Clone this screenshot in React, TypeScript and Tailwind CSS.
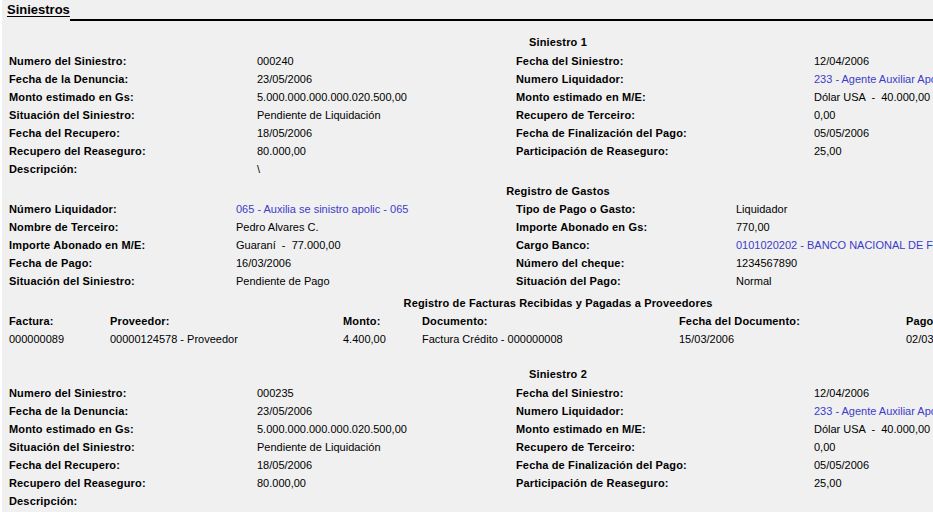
import React from 'react'

type Field = { label: string; value: string; link?: boolean }

const siniestros: { title: string; left: Field[]; right: Field[] }[] = [
  {
    title: 'Siniestro 1',
    left: [
      { label: 'Numero del Siniestro:', value: '000240' },
      { label: 'Fecha de la Denuncia:', value: '23/05/2006' },
      { label: 'Monto estimado en Gs:', value: '5.000.000.000.000.020.500,00' },
      { label: 'Situación del Siniestro:', value: 'Pendiente de Liquidación' },
      { label: 'Fecha del Recupero:', value: '18/05/2006' },
      { label: 'Recupero del Reaseguro:', value: '80.000,00' },
      { label: 'Descripción:', value: '\\' },
    ],
    right: [
      { label: 'Fecha del Siniestro:', value: '12/04/2006' },
      { label: 'Numero Liquidador:', value: '233 - Agente Auxiliar Apoderado', link: true },
      { label: 'Monto estimado en M/E:', value: 'Dólar USA  -  40.000,00' },
      { label: 'Recupero de Terceiro:', value: '0,00' },
      { label: 'Fecha de Finalización del Pago:', value: '05/05/2006' },
      { label: 'Participación de Reaseguro:', value: '25,00' },
    ],
  },
  {
    title: 'Siniestro 2',
    left: [
      { label: 'Numero del Siniestro:', value: '000235' },
      { label: 'Fecha de la Denuncia:', value: '23/05/2006' },
      { label: 'Monto estimado en Gs:', value: '5.000.000.000.000.020.500,00' },
      { label: 'Situación del Siniestro:', value: 'Pendiente de Liquidación' },
      { label: 'Fecha del Recupero:', value: '18/05/2006' },
      { label: 'Recupero del Reaseguro:', value: '80.000,00' },
      { label: 'Descripción:', value: '' },
    ],
    right: [
      { label: 'Fecha del Siniestro:', value: '12/04/2006' },
      { label: 'Numero Liquidador:', value: '233 - Agente Auxiliar Apoderado', link: true },
      { label: 'Monto estimado en M/E:', value: 'Dólar USA  -  40.000,00' },
      { label: 'Recupero de Terceiro:', value: '0,00' },
      { label: 'Fecha de Finalización del Pago:', value: '05/05/2006' },
      { label: 'Participación de Reaseguro:', value: '25,00' },
    ],
  },
]

const gastosLeft: Field[] = [
  { label: 'Número Liquidador:', value: '065 - Auxilia se sinistro apolic - 065', link: true },
  { label: 'Nombre de Terceiro:', value: 'Pedro Alvares C.' },
  { label: 'Importe Abonado en M/E:', value: 'Guaraní  -  77.000,00' },
  { label: 'Fecha de Pago:', value: '16/03/2006' },
  { label: 'Situación del Siniestro:', value: 'Pendiente de Pago' },
]

const gastosRight: Field[] = [
  { label: 'Tipo de Pago o Gasto:', value: 'Liquidador' },
  { label: 'Importe Abonado en Gs:', value: '770,00' },
  { label: 'Cargo Banco:', value: '0101020202 - BANCO NACIONAL DE FOMENTO', link: true },
  { label: 'Número del cheque:', value: '1234567890' },
  { label: 'Situación del Pago:', value: 'Normal' },
]

const facturaCols = [
  { head: 'Factura:', value: '000000089', w: 'w-[101px]' },
  { head: 'Proveedor:', value: '00000124578 - Proveedor', w: 'w-[233px]' },
  { head: 'Monto:', value: '4.400,00', w: 'w-[79px]' },
  { head: 'Documento:', value: 'Factura Crédito - 000000008', w: 'w-[257px]' },
  { head: 'Fecha del Documento:', value: '15/03/2006', w: 'w-[227px]' },
  { head: 'Pago:', value: '02/03/2006', w: 'w-[200px]' },
]

const label = 'font-bold text-[11px] leading-[13px] tracking-[0.15px] text-black whitespace-nowrap'
const value = 'text-[11px] leading-[13px] whitespace-pre'

function Value({ f, w }: { f: Field; w: string }) {
  return <span className={`${w} ${value} ${f.link ? 'text-[#3c3cc8]' : 'text-black'}`}>{f.value}</span>
}

function Header({ children, className = '' }: { children: React.ReactNode; className?: string }) {
  return (
    <div className={`w-[1098px] text-center font-bold text-[11px] tracking-[0.15px] text-black whitespace-nowrap ${className}`}>{children}</div>
  )
}

function SiniestroBlock({ s, first }: { s: (typeof siniestros)[number]; first: boolean }) {
  return (
    <div className={first ? 'mt-[11px]' : 'mt-[16px]'}>
      <Header className="h-[20px] leading-[20px]">{s.title}</Header>
      <div className="flex">
        <div className="flex flex-col">
          {s.left.map(f => (
            <div key={f.label} className="flex h-[18px] items-center">
              <span className={`w-[248px] ${label}`}>{f.label}</span>
              <Value f={f} w="w-[259px]" />
            </div>
          ))}
        </div>
        <div className="flex flex-col">
          {s.right.map(f => (
            <div key={f.label} className="flex h-[18px] items-center">
              <span className={`w-[298px] ${label}`}>{f.label}</span>
              <Value f={f} w="w-[300px]" />
            </div>
          ))}
        </div>
      </div>
    </div>
  )
}

export default function App() {
  return (
    <div
      className="min-h-screen w-full overflow-hidden bg-[#f0f0f0] border-l-2 border-white pl-[7px]"
      style={{ fontFamily: '"Liberation Sans", Arial, sans-serif' }}
    >
      <div className="flex h-[21px] items-start -ml-[2px]">
        <span className="mt-[2px] text-[13px] leading-[16px] font-bold underline underline-offset-2 text-black">Siniestros</span>
        <div className="flex-1 self-stretch border-b-2 border-black" />
      </div>

      <SiniestroBlock s={siniestros[0]} first />

      <Header className="mt-[4px] h-[18px] leading-[18px]">Registro de Gastos</Header>
      <div className="flex">
        <div className="flex flex-col">
          {gastosLeft.map(f => (
            <div key={f.label} className="flex h-[18px] items-center">
              <span className={`w-[227px] ${label}`}>{f.label}</span>
              <Value f={f} w="w-[280px]" />
            </div>
          ))}
        </div>
        <div className="flex flex-col">
          {gastosRight.map(f => (
            <div key={f.label} className="flex h-[18px] items-center">
              <span className={`w-[220px] ${label}`}>{f.label}</span>
              <Value f={f} w="w-[380px]" />
            </div>
          ))}
        </div>
      </div>

      <Header className="mt-[4px] h-[18px] leading-[18px]">Registro de Facturas Recibidas y Pagadas a Proveedores</Header>
      <div className="flex h-[18px] items-center">
        {facturaCols.map(c => (
          <span key={c.head} className={`${c.w} shrink-0 ${label}`}>{c.head}</span>
        ))}
      </div>
      <div className="flex h-[18px] items-center">
        {facturaCols.map(c => (
          <span key={c.head} className={`${c.w} shrink-0 ${value} text-black`}>{c.value}</span>
        ))}
      </div>

      <SiniestroBlock s={siniestros[1]} first={false} />
    </div>
  )
}
